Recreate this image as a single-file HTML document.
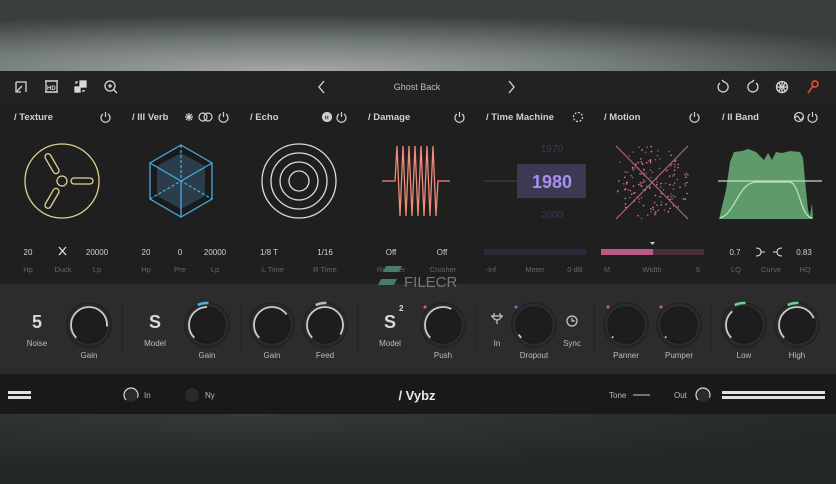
<!DOCTYPE html>
<html><head><meta charset="utf-8"><style>
html,body{margin:0;padding:0;width:836px;height:484px;overflow:hidden;background:#2a2e2d}
svg{display:block}
text{font-family:"Liberation Sans",sans-serif}
</style></head><body>
<svg width="836" height="484" viewBox="0 0 836 484" xmlns="http://www.w3.org/2000/svg">
<defs>
<radialGradient id="bgt" cx="0.35" cy="1" r="0.8">
<stop offset="0" stop-color="#a4a8a5"/><stop offset="0.5" stop-color="#747c7a"/><stop offset="1" stop-color="#3a3f3e"/>
</radialGradient>
<radialGradient id="bgb" cx="0.3" cy="0" r="0.8">
<stop offset="0" stop-color="#343a38"/><stop offset="1" stop-color="#232726"/>
</radialGradient>
</defs>
<rect x="0" y="0" width="836" height="71" fill="url(#bgt)"/>
<rect x="0" y="414" width="836" height="70" fill="url(#bgb)"/>
<rect x="0" y="71" width="836" height="32" fill="#222222"/>
<rect x="0" y="103" width="836" height="181" fill="#1f1f1f"/>
<rect x="0" y="284" width="836" height="90" fill="#2c2c2c"/>
<rect x="0" y="374" width="836" height="40" fill="#191919"/>

<g stroke="#d8d8d8" stroke-width="1.3" fill="none">
<path d="M16 82h10v10M16 82v10h5"/><path d="M17 91l5-5"/>
<rect x="46" y="81" width="11" height="11" fill="#222"/><line x1="45" y1="81" x2="58" y2="81"/><line x1="45" y1="92" x2="58" y2="92"/>
<rect x="80" y="81" width="6" height="6" fill="#d8d8d8"/><rect x="75" y="87" width="5" height="5" fill="#d8d8d8"/><path d="M76 84v-2h2M84 90v1h-2"/>
<circle cx="110" cy="86" r="5"/><path d="M114 90l3 3M110 84v4M108 86h4"/>
<path d="M324 81l-5 6 5 6M509 81l5 6-5 6"/>
<path d="M720 83a5 5 0 1 0 4-1l-2-2"/><path d="M756 83a5 5 0 1 1-4-1l2-2"/>
<circle cx="782" cy="87" r="5.5"/><path d="M776.5 87h11M782 81.5v11M779 83q3 4 0 8M785 83q-3 4 0 8"/>
</g>
<g stroke="#e0443a" stroke-width="1.8" fill="none"><circle cx="815" cy="84" r="3"/><path d="M813 86l-5 7"/></g>
<text x="417" y="90" fill="#bdbdbd" font-size="9" text-anchor="middle">Ghost Back</text>
<text x="47" y="90" fill="#d8d8d8" font-size="6" font-weight="bold">HD</text>

<g fill="#cfcfcf" font-size="9.5" font-weight="bold">
<text x="14" y="120">/ Texture</text><text x="132" y="120">/ III Verb</text><text x="250" y="120">/ Echo</text>
<text x="368" y="120">/ Damage</text><text x="486" y="120">/ Time Machine</text><text x="604" y="120">/ Motion</text><text x="722" y="120">/ II Band</text>
</g>
<g stroke="#d0d0d0" stroke-width="1.2" fill="none">
<path d="M103 114a4.5 4.5 0 1 0 5 0M105.5 112v5"/>
<path d="M221 114a4.5 4.5 0 1 0 5 0M223.5 112v5"/>
<path d="M339 114a4.5 4.5 0 1 0 5 0M341.5 112v5"/>
<path d="M457 114a4.5 4.5 0 1 0 5 0M459.5 112v5"/>
<path d="M692 114a4.5 4.5 0 1 0 5 0M694.5 112v5"/>
<path d="M810 114a4.5 4.5 0 1 0 5 0M812.5 112v5"/>
<circle cx="203" cy="117" r="4"/><circle cx="208" cy="117" r="4"/>
<path d="M185 117h8M189 113v8M186 114l6 6M192 114l-6 6"/>
<circle cx="327" cy="117" r="4.5" fill="#d0d0d0"/>
<circle cx="578" cy="117" r="4.5" stroke-dasharray="2 1.5"/>
<circle cx="799" cy="117" r="4.5"/><path d="M795 118q2-4 4 0t4-1"/>
</g>
<text x="325" y="119.5" font-size="5" fill="#222" font-weight="bold">H</text>

<g stroke="#e0d290" stroke-width="1.3" fill="none">
<circle cx="62" cy="181" r="37"/><circle cx="62" cy="181" r="5"/>
<rect x="71" y="178" width="22" height="6" rx="3"/>
<rect x="71" y="178" width="22" height="6" rx="3" transform="rotate(120 62 181)"/>
<rect x="71" y="178" width="22" height="6" rx="3" transform="rotate(240 62 181)"/>
</g>
<polygon points="181,145 212,163 212,199 181,217 150,199 150,163" fill="#1a1a1a"/>
<polygon points="181,153 205,166 205,196 181,209 157,196 157,166" fill="#2b3d4a"/>
<g stroke="#4aa8e0" stroke-width="1.3" fill="none">
<polygon points="181,145 212,163 212,199 181,217 150,199 150,163"/>
<path d="M150 163l31 18 31-18M181 181v36"/>
<path d="M181 145v36M150 199l31-18 31 18" stroke-dasharray="3 2"/>
</g>
<g stroke="#dcdcdc" stroke-width="1.3" fill="none">
<circle cx="299" cy="181" r="37"/><circle cx="299" cy="181" r="28"/><circle cx="299" cy="181" r="19"/><circle cx="299" cy="181" r="10"/>
</g>
<path d="M382 181h13 L397 146 L400 216 L403 146 L406 216 L409 146 L412 216 L415 146 L418 216 L421 146 L424 216 L427 146 L430 216 L433 146 L436 216 L438 181h12" stroke="#f08c78" stroke-width="1.3" fill="none"/>
<line x1="484" y1="181" x2="517" y2="181" stroke="#444"/>
<rect x="517" y="164" width="69" height="34" fill="#3c3a52"/>
<text x="552" y="188" font-size="18" font-weight="bold" fill="#a98ef0" text-anchor="middle">1980</text>
<text x="552" y="152" font-size="10" fill="#3b3a52" text-anchor="middle">1970</text>
<text x="552" y="218" font-size="10" fill="#3b3a52" text-anchor="middle">2000</text>
<g id="dots"></g>
<g stroke="#b86a78" stroke-width="1.1"><line x1="616" y1="146" x2="688" y2="219"/><line x1="688" y1="146" x2="616" y2="219"/></g>
<path d="M719 219 L726 190 L730 162 L734 152 L742 151 L748 149 L756 152 L760 156 L764 160 L768 153 L772 160 L776 152 L782 153 L790 151 L800 152 L803 158 L805 180 L808 210 L810 216 L812 203 L813 219 Z" fill="#5f9a6a"/>
<line x1="718" y1="181" x2="822" y2="181" stroke="#c8d8c8" stroke-width="1.2"/>
<path d="M720 218 C735 214 738 184 755 182 L790 182 C800 184 800 216 812 218" stroke="#b8e8c0" stroke-width="1.2" fill="none"/>

<g font-size="8" fill="#d0d0d0" text-anchor="middle">
<text x="28" y="255">20</text><text x="97" y="255">20000</text>
<text x="146" y="255">20</text><text x="180" y="255">0</text><text x="215" y="255">20000</text>
<text x="269" y="255">1/8 T</text><text x="325" y="255">1/16</text>
<text x="391" y="255">Off</text><text x="442" y="255">Off</text>
<text x="735" y="255">0.7</text><text x="804" y="255">0.83</text>
</g>
<path d="M59 247l7 8M66 247l-7 8" stroke="#ddd" stroke-width="1.3"/>
<path d="M756 248q5 0 5 4t-5 4M761 252h4M777 252h-4M782 248q-5 0-5 4t5 4" stroke="#ddd" stroke-width="1.1" fill="none"/>
<rect x="484" y="249" width="102" height="6" fill="#2c2a3a"/>
<rect x="601" y="249" width="52" height="6" fill="#b85a82"/><rect x="653" y="249" width="51" height="6" fill="#4a2e38"/>
<path d="M650 242h5l-2.5 3z" fill="#ccc"/>
<g font-size="7.5" fill="#666" text-anchor="middle">
<text x="28" y="272">Hp</text><text x="63" y="272">Duck</text><text x="97" y="272">Lp</text>
<text x="146" y="272">Hp</text><text x="180" y="272">Pre</text><text x="215" y="272">Lp</text>
<text x="273" y="272">L Time</text><text x="325" y="272">R Time</text>
<text x="391" y="272">Reducer</text><text x="443" y="272">Crusher</text>
<text x="491" y="272">-inf</text><text x="535" y="272">Meter</text><text x="575" y="272">0 dB</text>
<text x="607" y="272">M</text><text x="652" y="272">Width</text><text x="698" y="272">S</text>
<text x="736" y="272">LQ</text><text x="771" y="272">Curve</text><text x="805" y="272">HQ</text>
</g>
<g fill="#4a7a6a"><path d="M386 266h16l-3 6h-16z"/><path d="M381 279h16l-3 6h-16z"/></g>
<text x="404" y="287" font-size="15" fill="#777">FILECR</text>

<g stroke="#1f1f1f" stroke-width="1"><line x1="122" y1="304" x2="122" y2="352"/><line x1="241" y1="304" x2="241" y2="352"/><line x1="358" y1="304" x2="358" y2="352"/><line x1="476" y1="304" x2="476" y2="352"/><line x1="594" y1="304" x2="594" y2="352"/><line x1="711" y1="304" x2="711" y2="352"/></g>
<g font-weight="bold" fill="#d8d8d8" font-size="18" text-anchor="middle">
<text x="37" y="328">5</text><text x="155" y="328">S</text><text x="390" y="328">S</text>
</g>
<text x="399" y="311" font-size="8" fill="#ddd" font-weight="bold">2</text>
<g id="knobs"></g>
<g font-size="8" fill="#bdbdbd" text-anchor="middle">
<text x="37" y="346">Noise</text><text x="155" y="346">Model</text><text x="390" y="346">Model</text>
<text x="497" y="346">In</text><text x="572" y="346">Sync</text>
<text x="89" y="358">Gain</text><text x="207" y="358">Gain</text><text x="272" y="358">Gain</text><text x="325" y="358">Feed</text><text x="443" y="358">Push</text>
<text x="534" y="358">Dropout</text><text x="626" y="358">Panner</text><text x="679" y="358">Pumper</text><text x="744" y="358">Low</text><text x="797" y="358">High</text>
</g>
<g stroke="#ccc" stroke-width="1.2" fill="none">
<path d="M492 316q5 8 10 0M497 320v4M494 313v3M500 313v3M491 316h12"/>
<circle cx="572" cy="321" r="5"/><path d="M572 318v3h3"/>
</g>

<g fill="#e0e0e0"><rect x="8" y="391" width="23" height="3"/><rect x="8" y="396" width="23" height="3"/>
<rect x="722" y="391" width="103" height="3"/><rect x="722" y="396" width="103" height="3"/></g>
<circle cx="131" cy="395" r="7" fill="#2a2a2a" stroke="#d8d8d8" stroke-width="1.2" stroke-dasharray="30 14" transform="rotate(135 131 395)"/>
<circle cx="192" cy="395" r="7" fill="#2a2a2a"/>
<circle cx="703" cy="395" r="7" fill="#2a2a2a" stroke="#d8d8d8" stroke-width="1.2" stroke-dasharray="30 14" transform="rotate(135 703 395)"/>
<g font-size="8" fill="#bbb"><text x="144" y="398">In</text><text x="205" y="398">Ny</text><text x="609" y="398">Tone</text><text x="674" y="398">Out</text></g>
<line x1="633" y1="395" x2="650" y2="395" stroke="#ccc"/>
<text x="417" y="400" font-size="13" font-weight="bold" fill="#e8e8e8" text-anchor="middle">/ Vybz</text>
</svg>
<script>
var ns="http://www.w3.org/2000/svg";
var g=document.getElementById("dots");var s=7;
function r(){s=(s*9301+49297)%233280;return s/233280;}
for(var i=0;i<170;i++){var a=r()*6.283,d=Math.sqrt(r())*38;var x=652+Math.cos(a)*d,y=182+Math.sin(a)*d;
if(x<616||x>688||y<146||y>219)continue;var c=document.createElementNS(ns,"circle");
c.setAttribute("cx",x);c.setAttribute("cy",y);c.setAttribute("r",0.8);c.setAttribute("fill",r()>0.5?"#d87a92":"#9a5e6e");g.appendChild(c);}
var K=[[89,325,.85,"#ccc",0,null],[207,325,.5,"#ccc",0,"#4ab0e8"],[272,325,.7,"#ccc",0,null],[325,325,.95,"#ccc",0,"#bbb"],[443,325,.6,"#ccc","#d06080",null],
[534,325,.05,"#ccc","#7070d0",null],[626,325,.02,"#ccc","#d06080",null],[679,325,.02,"#ccc","#d06080",null],[744,325,.35,"#ccc",0,"#6ad88a"],[797,325,.75,"#ccc",0,"#6ad88a"]];
var kg=document.getElementById("knobs");
K.forEach(function(k){var cx=k[0],cy=k[1];var R=18,C=2*Math.PI*R;
var o=document.createElementNS(ns,"circle");o.setAttribute("cx",cx);o.setAttribute("cy",cy);o.setAttribute("r",22);o.setAttribute("fill","none");o.setAttribute("stroke","#232323");o.setAttribute("stroke-width","2");kg.appendChild(o);
if(k[5]){var m=document.createElementNS(ns,"circle");m.setAttribute("cx",cx);m.setAttribute("cy",cy);m.setAttribute("r",22);m.setAttribute("fill","none");m.setAttribute("stroke",k[5]);m.setAttribute("stroke-width","2.5");var L=2*Math.PI*22;m.setAttribute("stroke-dasharray",(L*0.08)+" "+L);m.setAttribute("transform","rotate(245 "+cx+" "+cy+")");kg.appendChild(m);}
var b=document.createElementNS(ns,"circle");b.setAttribute("cx",cx);b.setAttribute("cy",cy);b.setAttribute("r",R);b.setAttribute("fill","#1d1d1d");b.setAttribute("stroke","#1a1a1a");b.setAttribute("stroke-width","1.5");kg.appendChild(b);
var a=document.createElementNS(ns,"circle");a.setAttribute("cx",cx);a.setAttribute("cy",cy);a.setAttribute("r",R);a.setAttribute("fill","none");a.setAttribute("stroke",k[3]);a.setAttribute("stroke-width","1.8");
a.setAttribute("stroke-dasharray",(C*0.75*k[2])+" "+C);a.setAttribute("transform","rotate(135 "+cx+" "+cy+")");kg.appendChild(a);
if(k[4]){var d=document.createElementNS(ns,"circle");d.setAttribute("cx",cx-18);d.setAttribute("cy",cy-18);d.setAttribute("r",1.5);d.setAttribute("fill",k[4]);kg.appendChild(d);}
});
</script>
</body></html>
